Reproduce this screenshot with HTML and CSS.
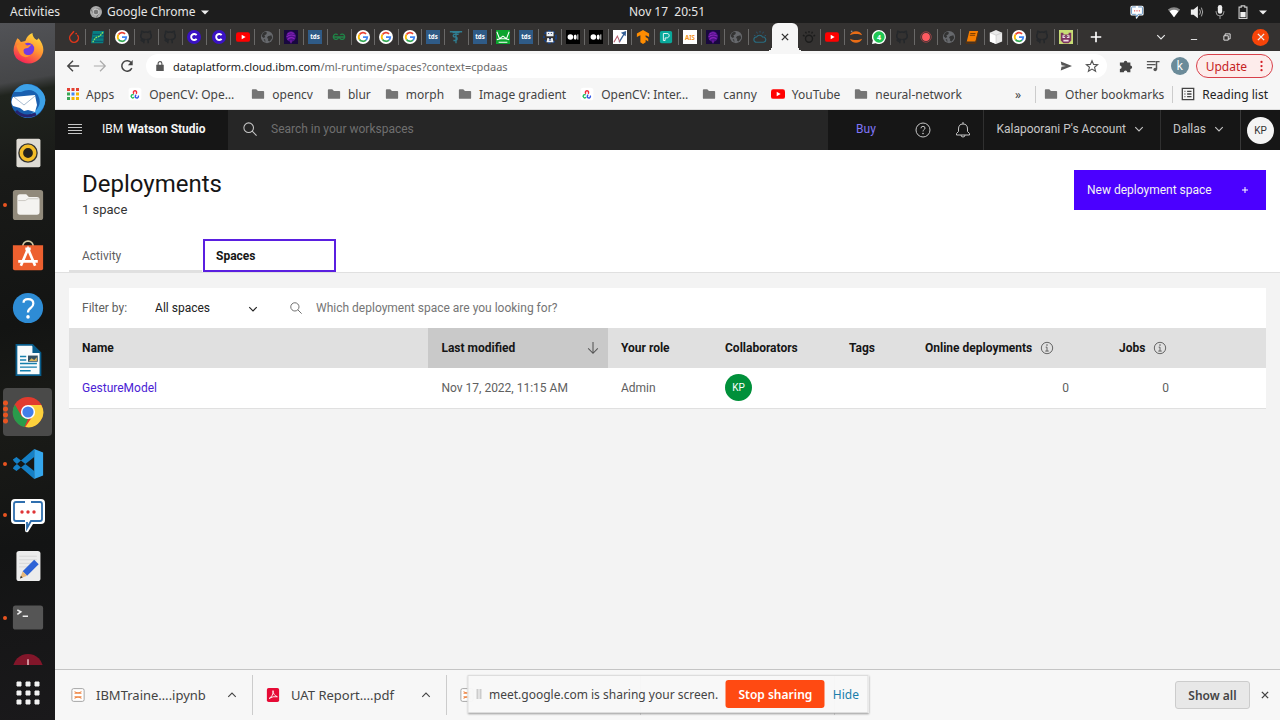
FILE: index.html
```html
<!DOCTYPE html>
<html lang="en">
<head>
<meta charset="utf-8">
<title>Deployments - IBM Watson Studio</title>
<link rel="stylesheet" href="styles.css">
</head>
<body>
<svg class="defs" aria-hidden="true">
  <symbol id="torch" viewBox="0 0 16 16"><path d="M8 1.500 4.500 5.500a5 5 0 1 0 7.300.200" fill="none" stroke="#e0361a" stroke-width="1.700"/><circle cx="10.500" cy="4" r="1" fill="#e0361a"/></symbol>
  <symbol id="scatter" viewBox="0 0 16 16"><path d="M2 1h13l-1 14H0z" fill="#087f83"/><path d="M2 5h13M2 9h13M2 13h13" stroke="#104d63"/><path d="m2 14 3-5 5-2 4-5" fill="none" stroke="#8be35a" stroke-width="1.500" stroke-dasharray="2 1"/></symbol>
  <symbol id="google" viewBox="0 0 16 16"><circle cx="8" cy="8" r="8" fill="#fff"/><path d="M4 5.200A4.900 4.900 0 0 1 11.500 4.500" fill="none" stroke="#ea4335" stroke-width="2"/><path d="M4 5.200a5 5 0 0 0 0 5.600" fill="none" stroke="#fbbc05" stroke-width="2"/><path d="M4 10.800a4.900 4.900 0 0 0 7.400.700" fill="none" stroke="#34a853" stroke-width="2"/><path d="M8 8h4.900a4.900 4.900 0 0 1-1.500 3.500" fill="none" stroke="#4285f4" stroke-width="2"/></symbol>
  <symbol id="github" viewBox="0 0 16 16"><path d="M5.500 15v-2C3 13.500 2.800 11.500 1.800 11M5.500 13c0-1 .3-1.500.8-2C3.500 10.700 2 9.500 2 6.800c0-1.200.4-2 1-2.700-.2-.8-.2-1.600.1-2.600 1 0 1.900.6 2.600 1.100a9 9 0 0 1 4.600 0c.7-.5 1.600-1.100 2.600-1.100.3 1 .3 1.800.1 2.600.6.700 1 1.500 1 2.700 0 2.700-1.500 3.900-4.300 4.200.5.500.8 1.200.8 2V15" fill="none" stroke="#25282b" stroke-width="1.800"/></symbol>
  <symbol id="cee" viewBox="0 0 16 16"><circle cx="8" cy="8" r="8" fill="#3a12c4"/><path d="M11 5.800a3.500 3.500 0 1 0 0 4.400" fill="none" stroke="#fff" stroke-width="2.200"/></symbol>
  <symbol id="youtube" viewBox="0 0 16 16"><rect y="2.500" width="16" height="11" rx="2.500" fill="#f00"/><path d="m6.500 5.500 4.500 2.500-4.500 2.500z" fill="#fff"/></symbol>
  <symbol id="globe" viewBox="0 0 16 16"><circle cx="8" cy="8" r="7" fill="#66686c"/><path d="M3 4c2-2 4-2 5-1l-1 2-2 1 1 2-2 1-2-2zM9 7l4-1 1 3-3 4-2-1 .5-2L8 9zM4 10l2 1v3z" fill="#333"/></symbol>
  <symbol id="brain" viewBox="0 0 16 16"><rect width="16" height="16" fill="#18083e"/><ellipse cx="8" cy="7.500" rx="5.500" ry="6" fill="#4d1087"/><path d="M4 5q3-3 7-1M3 8q4-4 10-1M4 11q3-4 8-1M8 12v3" fill="none" stroke="#8c24bd" stroke-width="1.200"/></symbol>
  <symbol id="tds" viewBox="0 0 16 16"><rect width="16" height="16" fill="#2f5b87"/><text x="8" y="10.500" font-size="7" font-weight="bold" fill="#fff" text-anchor="middle">tds</text></symbol>
  <symbol id="gfg" viewBox="0 0 16 16"><path d="M1 8h6.500a3 3 0 1 1-1-2.500M15 8H8.500a3 3 0 1 0 1-2.500" fill="none" stroke="#208447" stroke-width="1.500"/></symbol>
  <symbol id="python" viewBox="0 0 16 16"><path d="M1 2h14M4 3h8M8 1v14M11 5H7c-3 0-3 3 0 3s3 4 0 4H5" fill="none" stroke="#307e92" stroke-width="1.500"/></symbol>
  <symbol id="green" viewBox="0 0 16 16"><rect width="16" height="16" fill="#0ba42d"/><path d="m1 2 3 8 4-3 4 3 3-8M1 11l4-1h6l4 1M3 14h10" fill="none" stroke="#fff" stroke-width="1.200"/></symbol>
  <symbol id="robot" viewBox="0 0 16 16"><circle cx="8" cy="8" r="7" fill="none" stroke="#173f83" stroke-width="2" stroke-dasharray="3 2"/><path d="M4 2h8v5H4zM5 9h6l1 5H4z" fill="#edf2f7"/><path d="M6 4h1m2 0h1M7 9l2 3M9 9l-2 3" stroke="#172e68" stroke-width="1.300"/></symbol>
  <symbol id="medium" viewBox="0 0 16 16"><rect width="16" height="16" fill="#000"/><circle cx="5" cy="8" r="3.200" fill="#fff"/><ellipse cx="10.500" cy="8" rx="1.700" ry="3" fill="#fff"/><path d="M13.500 5v6" stroke="#fff"/></symbol>
  <symbol id="chart" viewBox="0 0 16 16"><rect width="16" height="16" fill="#fff"/><path d="m7 14 6-10" fill="none" stroke="#345e95" stroke-width="1.600"/><path d="m9 3 6-2-.5 6" fill="#345e95"/><path d="m1 14 4-7 3 7" fill="none" stroke="#b86070" stroke-width="1.200"/></symbol>
  <symbol id="tensor" viewBox="0 0 16 16"><path d="m1 4 7-4v16l-3-2V6L1 8zM8 0l7 4v4l-4-2v2l3 2v3l-3-2v3l-3 2z" fill="#ff8c00"/></symbol>
  <symbol id="teal" viewBox="0 0 16 16"><rect x="1" y="1" width="14" height="14" rx="2" fill="#0aa89b"/><path d="M5 4h4c4 0 3 5 0 5H7v3H5z" fill="none" stroke="#fff"/></symbol>
  <symbol id="ais" viewBox="0 0 16 16"><rect width="16" height="16" fill="#fff"/><text x="8" y="11" font-size="7" font-weight="bold" fill="#f39322" text-anchor="middle">AIS</text></symbol>
  <symbol id="cloud" viewBox="0 0 16 16"><path d="M4 14a3 3 0 0 1 0-6 4 4 0 0 1 7 0 3 3 0 0 1 1 6z" fill="none" stroke="#296c80" stroke-width="1.300"/><path d="M1 6l2 1M4 2l1 2M8 1v2M12 2l-1 2M15 6l-2 1" stroke="#275978"/></symbol>
  <symbol id="bug" viewBox="0 0 16 16"><circle cx="8" cy="10" r="4" fill="none" stroke="#1c1c1c" stroke-width="1.600"/><path d="M1 6l2 1M4 2l1 2M8 1v2M12 2l-1 2M15 6l-2 1" stroke="#1c1c1c" stroke-width="1.600"/></symbol>
  <symbol id="jupyter" viewBox="0 0 16 16"><path d="M1 6c2-6 12-6 14 0-4-2-10-2-14 0zM1 10c2 6 12 6 14 0-4 2-10 2-14 0z" fill="#e96d16"/><circle cx="3" cy="1.500" r="1" fill="#888"/></symbol>
  <symbol id="whatsapp" viewBox="0 0 16 16"><path d="M8 0a8 8 0 1 1-4 15L0 16l1-4A8 8 0 0 1 8 0z" fill="#fff"/><circle cx="8" cy="8" r="6.500" fill="#20c754"/><text x="8" y="11" font-size="8" font-weight="bold" fill="#fff" text-anchor="middle">4</text></symbol>
  <symbol id="record" viewBox="0 0 16 16"><circle cx="8" cy="8" r="6" fill="none" stroke="#a44246"/><circle cx="8" cy="8" r="4.500" fill="#ff5a60"/></symbol>
  <symbol id="book" viewBox="0 0 16 16"><path d="M5 1h10l-3 12H2z" fill="#f57d00"/><path d="M6 4h6M5.500 6h6M2 13l-1 2h11l3-12" fill="none" stroke="#6c3500"/></symbol>
  <symbol id="cube" viewBox="0 0 16 16"><path d="m8 0 7 3v10l-7 3-7-3V3z" fill="#e9e9e9"/><path d="m1 3 7 3v10l-7-3z" fill="#fff"/><path d="m1 3 7 3 7-3M8 6v10" stroke="#bbb" fill="none" stroke-width=".6"/></symbol>
  <symbol id="game" viewBox="0 0 16 16"><rect width="16" height="16" fill="#c8dd75"/><path d="M2 3h3v2h6V3h3v9l-3 3H5l-3-3z" fill="#7d3461"/><path d="M4 6h3v3H4zm5 0h3v3H9zM5 11h6v2H5z" fill="#f0d9e4"/><path d="M6 7v1m4-1v1" stroke="#222"/></symbol>
  <symbol id="chev" viewBox="0 0 16 16"><path d="m2 5 6 6 6-6" fill="none" stroke="currentColor" stroke-width="1.800"/></symbol>
  <symbol id="cross" viewBox="0 0 16 16"><path d="m3 3 10 10M13 3 3 13" stroke="currentColor" stroke-width="2.200"/></symbol>
  <symbol id="search" viewBox="0 0 16 16"><circle cx="6.500" cy="6.500" r="5.500" fill="none" stroke="currentColor" stroke-width="1.200"/><path d="m10.500 10.500 5 5" stroke="currentColor" stroke-width="1.200"/></symbol>
  <symbol id="info" viewBox="0 0 16 16"><circle cx="8" cy="8" r="6.500" fill="none" stroke="currentColor"/><path d="M6.500 7H8v4.500M6 11.500h4" fill="none" stroke="currentColor"/><circle cx="8" cy="4.500" r=".9" fill="currentColor"/></symbol>
  <symbol id="folder" viewBox="0 0 16 16"><path d="M1 3.500Q1 2.500 2 2.500h4l2 2h6q1 0 1 1v7q0 1-1 1H2q-1 0-1-1z" fill="#757575"/></symbol>
  <symbol id="opencv" viewBox="-3 -3 22 22"><rect x="-2" y="-2" width="20" height="20" rx="4" fill="#fff"/><path d="M6.500 7.500A2.500 2.500 0 1 1 9.500 7.500" fill="none" stroke="#f12d3a" stroke-width="2.200"/><path d="M6 9.500a2.500 2.500 0 1 0 .500 3.500" fill="none" stroke="#20c060" stroke-width="2.200"/><path d="M10 9.500a2.500 2.500 0 1 0 3 1" fill="none" stroke="#3157e5" stroke-width="2.200"/></symbol>
  <symbol id="notebook" viewBox="0 0 16 16"><rect x="1" y=".7" width="14" height="14.600" rx="2" fill="#fff" stroke="#999"/><path d="M4 4c2 2 6 2 8 0M4 6h8M4 10h8M4 12c2-2 6-2 8 0" fill="none" stroke="#ef8745" stroke-width="1.200"/></symbol>
  <symbol id="chat" viewBox="0 0 36 36"><path d="M5 2h26q4 0 4 4v17q0 4-4 4H23l-5 8q-3 1-3-2v-6H5q-4 0-4-4V6q0-4 4-4z" fill="#fff"/><path d="M15 5H6q-2 0-2 2v15q0 2 2 2h9M21 5h9q2 0 2 2v15q0 2-2 2h-9l-4 7v-6" fill="none" stroke="#2f6fae" stroke-width="1.800"/><g fill="#df3436"><circle cx="12" cy="15" r="1.700"/><circle cx="18" cy="15" r="1.700"/><circle cx="24" cy="15" r="1.700"/></g></symbol>
</svg>

<header class="topbar">
  <div class="top-left"><button class="plain">Activities</button><button class="plain app-menu"><svg class="i12" viewBox="0 0 16 16"><circle cx="8" cy="8" r="8" fill="#aaa"/><path d="M8 4h7M4.500 10 1 4M11.500 10 8 16" stroke="#666"/><circle cx="8" cy="8" r="3.800" fill="#777" stroke="#ddd"/></svg>Google Chrome<svg class="i8" viewBox="0 0 10 10"><path d="M0 3h10L5 8z" fill="#eee"/></svg></button></div>
  <time class="clock">Nov 17&nbsp; 20:51</time>
  <div class="tray">
    <svg class="i14 tray-chat"><use href="#chat"/></svg>
    <svg class="i14" viewBox="0 0 16 16"><path d="M1 5q7-5 14 0l-7 9z" fill="#888"/><path d="M3 7q5-3 10 0l-5 7z" fill="#fff"/></svg>
    <svg class="i14" viewBox="0 0 16 16"><path d="M1 5h3l5-4v14l-5-4H1z" fill="#eee"/><path d="M11 5q2 3 0 6M13 3q3 5 0 10" fill="none" stroke="#bbb"/></svg>
    <svg class="i14" viewBox="0 0 16 16"><rect x="5.500" y="0" width="5" height="10" rx="2.500" fill="#eee"/><path d="M3.500 7v1a4.500 4.500 0 0 0 9 0V7M8 12v4" fill="none" stroke="#aaa"/></svg>
    <svg class="i14" viewBox="0 0 16 16"><path d="M6 1h4v1.500h2.500v13h-9v-13H6z" fill="none" stroke="#ccc" stroke-width="1.300"/><path d="M5 8h6v6H5z" fill="#eee"/></svg>
    <svg class="i8" viewBox="0 0 10 10"><path d="M0 3h10L5 8z" fill="#eee"/></svg>
  </div>
</header>

<div class="desktop">
<nav class="dock" aria-label="Dock">
  <button class="dock-item" aria-label="Firefox"><svg viewBox="0 0 36 36"><defs><linearGradient id="fx" x1=".8" y1="0" x2=".3" y2="1"><stop offset="0" stop-color="#ffe33d"/><stop offset=".5" stop-color="#ff9332"/><stop offset="1" stop-color="#f41e58"/></linearGradient></defs><path d="M6 6q2 1 4 4l5-1q2-7 8-9 0 5 5 8l2-2q10 13 1 23-8 8-19 4Q-3 27 4 10z" fill="url(#fx)"/><circle cx="18" cy="18" r="7" fill="#733be2"/><path d="M5 14q7-5 12 0l5-1-4 4q-5 0-5 3 0 6 8 5-7 5-12-1-3-5-4-10z" fill="#ff912f"/></svg></button>
  <button class="dock-item big" aria-label="Thunderbird"><svg viewBox="0 0 36 36"><circle cx="18" cy="18" r="17" fill="#195faf"/><path d="M4 9Q13-4 27 4 40 13 33 25q-7 12-20 9 22-7 15-22-6-8-17-3z" fill="#3da1e7"/><path d="m3 14 22-2 2 10-2 7-7-2-4 1-4-3-7-2q-3-4 0-9z" fill="#fff"/><path d="m4 14 10 8 11-9" fill="none" stroke="#a9bdd1"/><path d="M6 28q8 8 20 3" fill="none" stroke="#26236f" stroke-width="3"/></svg></button>
  <button class="dock-item" aria-label="Rhythmbox"><svg viewBox="0 0 36 36"><rect x="5" y="2" width="27" height="32" rx="2" fill="#dedbd4"/><circle cx="18" cy="18" r="11" fill="#333"/><circle cx="18" cy="18" r="7.500" fill="#26231c" stroke="#f3bd28" stroke-width="4"/><circle cx="18" cy="18" r="3" fill="#222"/></svg></button>
  <button class="dock-item run" aria-label="Files"><svg viewBox="0 0 36 36"><rect x="1" y="1" width="34" height="34" rx="3" fill="#918a7b"/><path d="M6 9q0-3 3-3h7l3 3h9q3 0 3 3v14q0 3-3 3H9q-3 0-3-3z" fill="#f4f3f0"/><path d="M7 13h8l3-2h12" fill="none" stroke="#c8c5bd"/></svg></button>
  <button class="dock-item" aria-label="Software"><svg viewBox="0 0 36 36"><path d="M12 8C12-1 24-1 24 8" fill="none" stroke="#d6cba5" stroke-width="2"/><path d="M1 6h34v26q0 2-2 2H3q-2 0-2-2z" fill="#ed602f"/><path d="m10 29 8-19 8 19M7 24h22M15 10h6" fill="none" stroke="#fff" stroke-width="3"/></svg></button>
  <button class="dock-item" aria-label="Help"><svg viewBox="0 0 36 36"><circle cx="18" cy="18" r="17" fill="#2e8cd5"/><path d="M13 12q0-4 5-4 6 0 6 5 0 3-3 5-3 2-3 5" fill="none" stroke="#fff" stroke-width="2.500"/><circle cx="18" cy="28" r="2" fill="#fff"/></svg></button>
  <button class="dock-item" aria-label="Writer"><svg viewBox="0 0 36 36"><path d="M5 1h18l9 9v25H5z" fill="#f8fbfc" stroke="#085c8a" stroke-width="2"/><path d="M23 1v9h9z" fill="#085c8a"/><path d="M9 14h7M9 18h7M9 22h19M9 26h19M9 30h12" stroke="#1680ad" stroke-width="1.600"/><path d="M18 13h11v7H18z" fill="#345060"/><path d="m19 19 3-3 3 2 3-3v4z" fill="#d9b35b"/></svg></button>
  <button class="dock-item active" aria-label="Chrome"><i class="dots"></i><svg viewBox="0 0 36 36"><circle cx="18" cy="18" r="17" fill="#e13b2e"/><path d="M3.200 9.600 11 23l7 3-4 9A17 17 0 0 1 3.200 9.600z" fill="#299b4b"/><path d="M18 10h15a17 17 0 0 1-18 25l8-12z" fill="#fdd13c"/><circle cx="18" cy="18" r="8" fill="#fff"/><circle cx="18" cy="18" r="6.300" fill="#437ee9"/></svg></button>
  <button class="dock-item run" aria-label="Code"><svg viewBox="0 0 36 36"><path d="M25 1v9L5 26l-4-3 1-2zM25 35v-9L5 10l-4 3 1 2z" fill="#1580c6"/><path d="m25 1 10 4v26l-10 4z" fill="#35a7ed"/></svg></button>
  <button class="dock-item run big" aria-label="Chat"><svg><use href="#chat"/></svg></button>
  <button class="dock-item" aria-label="Text Editor"><svg viewBox="0 0 36 36"><rect x="5" y="1" width="27" height="34" rx="3" fill="#ececec"/><path d="M8 7h20M8 11h20M8 15h14M8 19h10" stroke="#d5d5d5"/><path d="m12 24 13-13 5 5-13 13z" fill="#2e63d6"/><path d="m12 24 5 5-8 3z" fill="#e7b779"/><path d="m10 29 2 2-3 1z" fill="#333"/></svg></button>
  <button class="dock-item run" aria-label="Terminal"><svg viewBox="0 0 36 36"><rect x="1" y="4" width="34" height="27" rx="3" fill="#555"/><path d="m6 9 4 2-4 3M12 16h6" fill="none" stroke="#eee" stroke-width="1.700"/></svg></button>
  <button class="dock-item last" aria-label="Updater"><svg viewBox="0 0 36 36"><circle cx="18" cy="18" r="17" fill="#82162a"/><path d="M18 7v8" stroke="#d9a0a9" stroke-width="2"/></svg></button>
  <button class="apps" aria-label="Show applications"><svg viewBox="0 0 24 24" fill="#f2f2f2"><path d="M1 1h4v4H1zm9 0h4v4h-4zm9 0h4v4h-4zM1 10h4v4H1zm9 0h4v4h-4zm9 0h4v4h-4zM1 19h4v4H1zm9 0h4v4h-4zm9 0h4v4h-4z" stroke="#f2f2f2" stroke-linejoin="round"/></svg></button>
</nav>

<div class="browser">
<div class="tabstrip">
  <div class="tabs tabs-a">
    <button class="tab"><svg><use href="#torch"/></svg></button><button class="tab"><svg><use href="#scatter"/></svg></button><button class="tab"><svg><use href="#google"/></svg></button><button class="tab"><svg><use href="#github"/></svg></button><button class="tab"><svg><use href="#github"/></svg></button><button class="tab"><svg><use href="#cee"/></svg></button><button class="tab"><svg><use href="#cee"/></svg></button><button class="tab"><svg><use href="#youtube"/></svg></button><button class="tab"><svg><use href="#globe"/></svg></button><button class="tab"><svg><use href="#brain"/></svg></button><button class="tab"><svg><use href="#tds"/></svg></button><button class="tab"><svg><use href="#gfg"/></svg></button>
  </div>
  <div class="tabs tabs-b">
    <button class="tab"><svg><use href="#google"/></svg></button><button class="tab"><svg><use href="#google"/></svg></button><button class="tab"><svg><use href="#google"/></svg></button><button class="tab"><svg><use href="#tds"/></svg></button><button class="tab"><svg><use href="#python"/></svg></button><button class="tab"><svg><use href="#tds"/></svg></button><button class="tab"><svg><use href="#green"/></svg></button><button class="tab"><svg><use href="#tds"/></svg></button><button class="tab"><svg><use href="#robot"/></svg></button><button class="tab"><svg><use href="#medium"/></svg></button><button class="tab"><svg><use href="#medium"/></svg></button><button class="tab"><svg><use href="#chart"/></svg></button><button class="tab"><svg><use href="#tensor"/></svg></button><button class="tab"><svg><use href="#teal"/></svg></button><button class="tab"><svg><use href="#ais"/></svg></button><button class="tab"><svg><use href="#brain"/></svg></button><button class="tab"><svg><use href="#globe"/></svg></button><button class="tab flush"><svg><use href="#cloud"/></svg></button>
  </div>
  <button class="tab-active" aria-label="Close tab"><svg class="i10"><use href="#cross"/></svg></button>
  <div class="tabs tabs-c">
    <button class="tab"><svg><use href="#bug"/></svg></button><button class="tab"><svg><use href="#youtube"/></svg></button><button class="tab"><svg><use href="#jupyter"/></svg></button><button class="tab"><svg><use href="#whatsapp"/></svg></button><button class="tab"><svg><use href="#github"/></svg></button><button class="tab"><svg><use href="#record"/></svg></button><button class="tab"><svg><use href="#globe"/></svg></button><button class="tab"><svg><use href="#book"/></svg></button><button class="tab"><svg><use href="#cube"/></svg></button><button class="tab"><svg><use href="#google"/></svg></button><button class="tab"><svg><use href="#github"/></svg></button><button class="tab"><svg><use href="#game"/></svg></button>
  </div>
  <button class="plain newtab" aria-label="New tab"><svg class="i12" viewBox="0 0 16 16"><path d="M8 1v14M1 8h14" stroke="#fff" stroke-width="2.200"/></svg></button>
  <div class="window-controls">
    <svg class="i10"><use href="#chev"/></svg>
    <svg class="i10" viewBox="0 0 16 16"><path d="M3 12h10" stroke="#ddd" stroke-width="1.600"/></svg>
    <svg class="i10" viewBox="0 0 16 16"><path d="M3 6h7v7H3zM5 6V3h8v8h-3" fill="none" stroke="#ddd" stroke-width="1.600"/></svg>
    <button class="close" aria-label="Close"><svg class="i10"><use href="#cross"/></svg></button>
  </div>
</div>
<div class="toolbar">
  <svg class="i14" viewBox="0 0 16 16"><path d="M15 8H3M8 2 2 8l6 6" fill="none" stroke="#444" stroke-width="1.600"/></svg>
  <svg class="i14" viewBox="0 0 16 16"><path d="M1 8h12M8 2l6 6-6 6" fill="none" stroke="#aaa" stroke-width="1.400"/></svg>
  <svg class="i14" viewBox="0 0 16 16"><path d="M13.500 10.500a6 6 0 1 1-.5-6" fill="none" stroke="#444" stroke-width="1.700"/><path d="M14.500 1v6H9z" fill="#444"/></svg>
  <div class="omnibox">
    <svg class="i10" viewBox="0 0 16 16"><path d="M2 6h12v10H2z" fill="#555"/><path d="M5 7V4a3 3 0 0 1 6 0v3" fill="none" stroke="#555" stroke-width="1.800"/></svg>
    <span class="url"><b>dataplatform.cloud.ibm.com</b>/ml-runtime/spaces?context=cpdaas</span>
    <svg class="i12" viewBox="0 0 16 16"><path d="m1 2 15 6-15 6 1-5 6-1-6-1z" fill="#555"/></svg>
    <svg class="i14" viewBox="0 0 16 16"><path d="m8 2 1.800 4.200 4.700.3-3.600 3 1.200 4.500L8 11.500 3.900 14l1.200-4.500-3.600-3 4.700-.3z" fill="none" stroke="#555" stroke-width="1.300"/></svg>
  </div>
  <svg class="i14" viewBox="0 0 16 16"><path d="M1 4h4.500a2 2 0 1 1 4 0H13v3.500a2 2 0 1 1 0 4V15H9.500a2 2 0 0 0-4 0H1v-3.500a2 2 0 0 0 0-4z" fill="#444"/></svg>
  <svg class="i14" viewBox="0 0 16 16"><path d="M1 3h10M1 6.500h10M1 10h6" stroke="#555" stroke-width="1.500"/><path d="M12 12V3h3.500" fill="none" stroke="#555" stroke-width="1.700"/><circle cx="10.500" cy="12" r="2" fill="#555"/></svg>
  <span class="profile">k</span>
  <button class="update">Update<svg class="i12" viewBox="0 0 16 16" fill="#d31b22"><circle cx="6" cy="2.500" r="1.500"/><circle cx="6" cy="8" r="1.500"/><circle cx="6" cy="13.500" r="1.500"/></svg></button>
</div>
<nav class="bookmarks">
  <a href="#"><svg class="i12" viewBox="0 0 16 16"><path d="M0 0h4v4H0zM6 0h4v4H6zM12 0h4v4h-4z" fill="#e34133"/><path d="M0 6h4v4H0z" fill="#3aa757"/><path d="M6 6h4v4H6z" fill="#4285f4"/><path d="M12 6h4v4h-4zM6 12h4v4H6z" fill="#f4b400"/><path d="M0 12h4v4H0z" fill="#3aa757"/><path d="M12 12h4v4h-4z" fill="#f4b400"/></svg>Apps</a>
  <a href="#"><svg class="i14"><use href="#opencv"/></svg>OpenCV: Ope…</a>
  <a href="#" class="first-folder"><svg class="i14"><use href="#folder"/></svg>opencv</a>
  <a href="#"><svg class="i14"><use href="#folder"/></svg>blur</a>
  <a href="#"><svg class="i14"><use href="#folder"/></svg>morph</a>
  <a href="#"><svg class="i14"><use href="#folder"/></svg>Image gradient</a>
  <a href="#"><svg class="i14"><use href="#opencv"/></svg>OpenCV: Inter…</a>
  <a href="#"><svg class="i14"><use href="#folder"/></svg>canny</a>
  <a href="#"><svg class="i14"><use href="#youtube"/></svg>YouTube</a>
  <a href="#"><svg class="i14"><use href="#folder"/></svg>neural-network</a>
  <span class="more">»</span>
  <a href="#" class="divided"><svg class="i14"><use href="#folder"/></svg>Other bookmarks</a>
  <a href="#" class="divided reading"><svg class="i14" viewBox="0 0 16 16"><path d="M1.500 1.500h13v13h-13zM4 5h1M4 8h1M4 11h1M7 5h5M7 8h5M7 11h5" fill="none" stroke="#444" stroke-width="1.500"/></svg>Reading list</a>
</nav>

<header class="ibm">
  <button class="burger" aria-label="Menu"><svg class="i14" viewBox="0 0 14 14"><path d="M0 1.500h14M0 4.500h14M0 7.500h14M0 10.500h14" stroke="#c6c6c6"/></svg></button>
  <a class="brand" href="#">IBM <b>Watson Studio</b></a>
  <label class="global-search"><svg class="i14"><use href="#search"/></svg><input type="text" placeholder="Search in your workspaces" aria-label="Search in your workspaces"></label>
  <a class="buy" href="#">Buy</a>
  <button class="ibm-icon" aria-label="Help"><svg class="i16" viewBox="0 0 16 16"><circle cx="8" cy="8" r="7" fill="none" stroke="currentColor"/><path d="M6 6.300q0-2 2-2t2 1.800q0 1-1 1.600-1 .500-1 1.800" fill="none" stroke="currentColor"/><circle cx="8" cy="11.500" r=".8" fill="currentColor"/></svg></button>
  <button class="ibm-icon" aria-label="Notifications"><svg class="i16" viewBox="0 0 16 16"><path d="M8 0v2M3.500 7q0-5 4.500-5t4.500 5v2.500l2 2v1.500H1.500v-1.500l2-2zM6 13q0 2 2 2t2-2" fill="none" stroke="currentColor"/></svg></button>
  <button class="ibm-menu">Kalapoorani P's Account<svg class="i10"><use href="#chev"/></svg></button>
  <button class="ibm-menu">Dallas<svg class="i10"><use href="#chev"/></svg></button>
  <button class="ibm-user"><span>KP</span></button>
</header>

<main class="page">
  <section class="page-head">
    <div class="title-row">
      <div><h1>Deployments</h1><p>1 space</p></div>
      <button class="primary">New deployment space<svg class="i8" viewBox="0 0 8 8"><path d="M4 1v6M1 4h6" stroke="#fff"/></svg></button>
    </div>
    <div class="page-tabs" role="tablist"><button role="tab">Activity</button><button role="tab" class="selected" aria-selected="true">Spaces</button></div>
  </section>
  <section class="panel">
    <div class="filters">
      <label for="filter">Filter by:</label>
      <span class="select"><select id="filter"><option>All spaces</option></select><svg class="i10"><use href="#chev"/></svg></span>
      <label class="find"><svg class="i12"><use href="#search"/></svg><input type="text" placeholder="Which deployment space are you looking for?" aria-label="Find a deployment space"></label>
    </div>
    <table>
      <colgroup><col class="c-name"><col class="c-mod"><col class="c-role"><col class="c-collab"><col class="c-tags"><col class="c-online"><col class="c-jobs"><col class="c-end"></colgroup>
      <thead><tr><th>Name</th><th class="sorted"><span class="th-in spread">Last modified<svg class="i14" viewBox="0 0 16 16"><path d="M8 1v13M2.500 8.500 8 14l5.500-5.500" fill="none" stroke="currentColor" stroke-width="1.200"/></svg></span></th><th>Your role</th><th>Collaborators</th><th>Tags</th><th><span class="th-in">Online deployments<svg class="i14"><use href="#info"/></svg></span></th><th><span class="th-in">Jobs<svg class="i14"><use href="#info"/></svg></span></th><th></th></tr></thead>
      <tbody><tr><td><a href="#">GestureModel</a></td><td>Nov 17, 2022, 11:15 AM</td><td>Admin</td><td><span class="avatar">KP</span></td><td></td><td class="num">0</td><td class="num">0</td><td></td></tr></tbody>
    </table>
  </section>
</main>

<footer class="shelf">
  <div class="download"><svg class="i14"><use href="#notebook"/></svg><span>IBMTraine….ipynb</span><svg class="i10 up"><use href="#chev"/></svg></div>
  <div class="download"><svg class="i14" viewBox="0 0 16 16"><rect x="1" width="14" height="16" rx="2" fill="#e60b36"/><path d="M3.500 12q5-3 4.500-9 0 5 5 7-5-1-9.500 2z" fill="none" stroke="#fff"/></svg><span>UAT Report….pdf</span><svg class="i10 up"><use href="#chev"/></svg></div>
  <div class="download"><svg class="i14"><use href="#notebook"/></svg></div>
  <div class="download"></div>
  <button class="show-all">Show all</button>
  <button class="plain shelf-close" aria-label="Close"><svg class="i10"><use href="#cross"/></svg></button>
  <div class="sharing"><i class="grip"></i><span>meet.google.com is sharing your screen.</span><button class="stop">Stop sharing</button><a href="#">Hide</a></div>
</footer>
</div>
</div>
</body>
</html>
```
FILE: styles.css
```css
* { box-sizing: border-box; }
body { margin: 0; min-height: 100vh; display: flex; flex-direction: column; font-family: "Noto Sans", sans-serif; font-size: 12px; color: #444; background: #f3f3f3; }
button, input, select { font: inherit; color: inherit; border: 0; background: none; padding: 0; margin: 0; }
a { color: inherit; text-decoration: none; }
svg { display: block; flex: none; }
.defs { display: none; }
.i8 { width: 8px; height: 8px; }
.i10 { width: 10px; height: 10px; }
.i12 { width: 12px; height: 12px; }
.i14 { width: 14px; height: 14px; }
.i16 { width: 16px; height: 16px; }
.plain { display: flex; align-items: center; }

.topbar { height: 23px; display: grid; grid-template-columns: 1fr auto 1fr; align-items: center; background: #1d1d1d; color: #e6e6e6; }
.top-left { display: flex; gap: 30px; padding-left: 10px; }
.app-menu { gap: 5px; }
.clock { padding-left: 54px; }
.tray { display: flex; justify-content: flex-end; align-items: center; gap: 9px; padding-right: 13px; }
.tray-chat { margin-right: 14px; }

.desktop { flex: 1; display: flex; }
.dock { width: 55px; flex: none; display: flex; flex-direction: column; align-items: center; background: linear-gradient(170deg, #525357 0, #454648 60px, #20241e 72px, #191a18 150px, #131413 300px, #1a1b17 390px, #131414 520px, #1a191b 100%); }
.dock-item { position: relative; width: 49px; height: 52px; display: grid; place-items: center; }
.dock-item svg { width: 32px; height: 32px; }
.dock-item.big svg { width: 36px; height: 36px; }
.dock-item.active { background: #4a4a49; border-radius: 4px; height: 48px; margin: 2px 0; }
.dock-item.run { height: 51px; }
.run::before { content: ""; position: absolute; left: 0; top: 24px; width: 4px; height: 4px; border-radius: 50%; background: #e95420; }
.dots { position: absolute; left: 0; top: 12px; width: 5px; height: 24px; background: radial-gradient(circle, #e95420 2px, transparent 3px) 0 0 / 5px 6px; }
.dock-item.last { height: 22px; overflow: hidden; place-items: start center; padding-top: 10px; }
.apps { flex: 1; display: grid; place-items: center; }
.apps svg { width: 24px; height: 24px; }

.browser { flex: 1; min-width: 0; display: flex; flex-direction: column; }
.tabstrip { height: 28px; display: flex; align-items: center; background: #343231; padding-left: 7px; }
.tabs { display: flex; }
.tabs-a { width: 290px; }
.tabs-b { width: 420px; }
.tabs-c { width: 280px; }
.tab { flex: 1; height: 16px; display: grid; place-items: center; border-right: 1px solid #6a6968; }
.tab.flush { border-color: transparent; }
.tab svg { width: 14px; height: 14px; font-family: "Noto Sans", sans-serif; }
.tab-active { position: relative; width: 26px; height: 28px; display: grid; place-items: center; background: #f6f6f6; border-radius: 6px 6px 0 0; color: #333; }
.tab-active::before, .tab-active::after { content: ""; position: absolute; bottom: 0; width: 5px; height: 5px; }
.tab-active::before { right: 100%; background: radial-gradient(circle at 0 0, transparent 5px, #f6f6f6 5px); }
.tab-active::after { left: 100%; background: radial-gradient(circle at 100% 0, transparent 5px, #f6f6f6 5px); }
.newtab { margin-left: 12px; }
.window-controls { margin-left: auto; display: flex; align-items: center; gap: 23px; padding-right: 11px; color: #eee; }
.close { width: 17px; height: 17px; border-radius: 50%; background: #f64409; display: grid; place-items: center; margin-left: -3px; }

.toolbar { height: 30px; display: flex; align-items: center; gap: 13px; padding: 0 7px 0 11px; background: #f6f6f6; }
.omnibox { flex: 1; height: 24px; margin: 0 -1px; display: flex; align-items: center; gap: 13px; padding: 0 8px 0 9px; background: #fff; border-radius: 12px; }
.url { flex: 1; margin-left: -5px; color: #6b6b6b; font-size: 11px; }
.url b { font-weight: 400; color: #222; }
.profile { width: 18px; height: 18px; margin-left: -2px; border-radius: 50%; background: #6b8b99; color: #fff; text-align: center; line-height: 17px; }
.update { height: 24px; display: flex; align-items: center; gap: 10px; margin-left: -6px; padding: 0 3px 0 9px; border: 1px solid #d8404a; border-radius: 12px; background: #fdeceb; color: #c5221f; }
.bookmarks { height: 29px; display: flex; align-items: center; gap: 14px; padding: 0 12px 2px; background: #f6f6f6; border-bottom: 1px solid #ddd; white-space: nowrap; }
.bookmarks a { display: flex; align-items: center; gap: 7px; }
.bookmarks .first-folder { padding-left: 3px; }
.more { margin-left: auto; }
.bookmarks .divided { border-left: 1px solid #ccc; padding-left: 8px; }
.bookmarks .reading { margin-left: -6px; color: #222; }

.ibm, .page { font-family: Roboto, sans-serif; font-size: 12px; }
.ibm { height: 40px; display: flex; background: #161616; color: #c6c6c6; }
.burger { width: 40px; display: grid; place-items: center; }
.brand { width: 133px; display: flex; align-items: center; gap: 4px; padding: 0 0 2px 7px; color: #f4f4f4; }
.global-search { flex: 1; display: flex; align-items: center; gap: 14px; padding: 0 15px 2px; background: #262626; }
.global-search input { flex: 1; }
.global-search input::placeholder { color: #6f6f6f; }
.buy { width: 75px; display: grid; place-items: center; padding-bottom: 2px; color: #8075f7; }
.ibm-icon { width: 40px; display: grid; place-items: center; }
.ibm-menu { display: flex; align-items: center; gap: 8px; padding: 0 16px 2px 12px; border-left: 1px solid #303030; }
.ibm-user { width: 40px; border-left: 1px solid #393939; display: grid; place-items: center; }
.ibm-user span { width: 27px; height: 27px; border-radius: 50%; background: #f4f4f4; color: #333; font-size: 10px; line-height: 27px; }

.page { flex: 1; background: #f3f3f3; color: #606060; }
.page-head { background: #fff; border-bottom: 1px solid #e0e0e0; padding: 20px 14px 0; }
.title-row { display: flex; justify-content: space-between; align-items: flex-start; padding-left: 13px; height: 69px; }
h1 { margin: 0; font-size: 24px; line-height: 28px; font-weight: 400; color: #161616; }
.title-row p { margin: 3px 0 0; font-size: 13px; line-height: 18px; color: #333; }
.primary { width: 192px; height: 40px; padding: 0 17px 0 13px; display: flex; align-items: center; justify-content: space-between; background: #4b00ff; color: #f4f4f4; }
.page-tabs { display: flex; gap: 1px; }
.page-tabs button { width: 133px; height: 33px; padding: 2px 0 0 13px; text-align: left; border-bottom: 2px solid #e0e0e0; }
.page-tabs .selected { border: 2px solid #5a1fe0; padding: 0 0 0 11px; font-weight: 700; color: #161616; }
.panel { margin: 15px 14px; background: #fff; }
.filters { height: 40px; display: flex; align-items: center; padding-left: 13px; }
.select { position: relative; width: 103px; margin-left: 28px; color: #222; }
.select select { appearance: none; width: 100%; }
.select svg { position: absolute; right: 0; top: 3px; pointer-events: none; }
.find { flex: 1; display: flex; align-items: center; gap: 14px; margin-left: 32px; }
.find input { flex: 1; }
.find input::placeholder { color: #757575; }
table { width: 100%; table-layout: fixed; border-collapse: collapse; border-bottom: 1px solid #e0e0e0; }
th, td { height: 40px; padding: 0 13px; text-align: left; white-space: nowrap; }
th { background: #e0e0e0; color: #161616; font-weight: 700; }
th.sorted { background: #c9c9c9; padding-right: 8px; }
.th-in { display: flex; align-items: center; gap: 8px; }
.th-in .i14 { color: #555; }
.spread { justify-content: space-between; }
.c-mod { width: 15%; }
.c-role { width: 104px; }
.c-collab { width: 124px; }
.c-tags { width: 76px; }
.c-online { width: 194px; }
.c-jobs { width: 100px; }
.c-end { width: 60px; }
td a { color: #4a22d4; }
td.num { text-align: right; padding-right: 37px; }
.avatar { display: block; width: 27px; height: 27px; border-radius: 50%; background: #00903a; color: #fff; font-size: 10px; line-height: 27px; text-align: center; }

.shelf { position: relative; height: 51px; display: flex; align-items: center; border-top: 1px solid #c4c4c4; background: #f7f7f7; padding-right: 10px; font-size: 13px; }
.download { width: 194px; height: 40px; flex: none; display: flex; align-items: center; gap: 11px; padding: 0 15px 0 13px; border-right: 1px solid #ccc; }
.download:first-child { width: 198px; padding-left: 16px; }
.download .up { margin-left: auto; transform: rotate(180deg); }
.show-all { width: 75px; height: 28px; margin-left: auto; border: 1px solid #ccc; border-radius: 3px; background: #e8e8e8; font-size: 12px; font-weight: 600; }
.shelf-close { margin-left: 10px; }
.sharing { position: absolute; left: 50%; top: 5px; transform: translateX(-50%); height: 38px; width: 401px; display: flex; align-items: center; padding: 0 8px; background: rgba(248, 248, 248, .96); border: 1px solid #ddd; box-shadow: 0 1px 2px #999; font-size: 12px; white-space: nowrap; }
.grip { width: 5px; height: 10px; border: solid #ccc; border-width: 0 2px; margin-right: 8px; }
.sharing .stop { width: 99px; height: 28px; margin: 0 8px 0 auto; border-radius: 3px; background: #ff4a12; color: #fff; font-weight: 600; }
.sharing a { color: #1b7fab; }
```
